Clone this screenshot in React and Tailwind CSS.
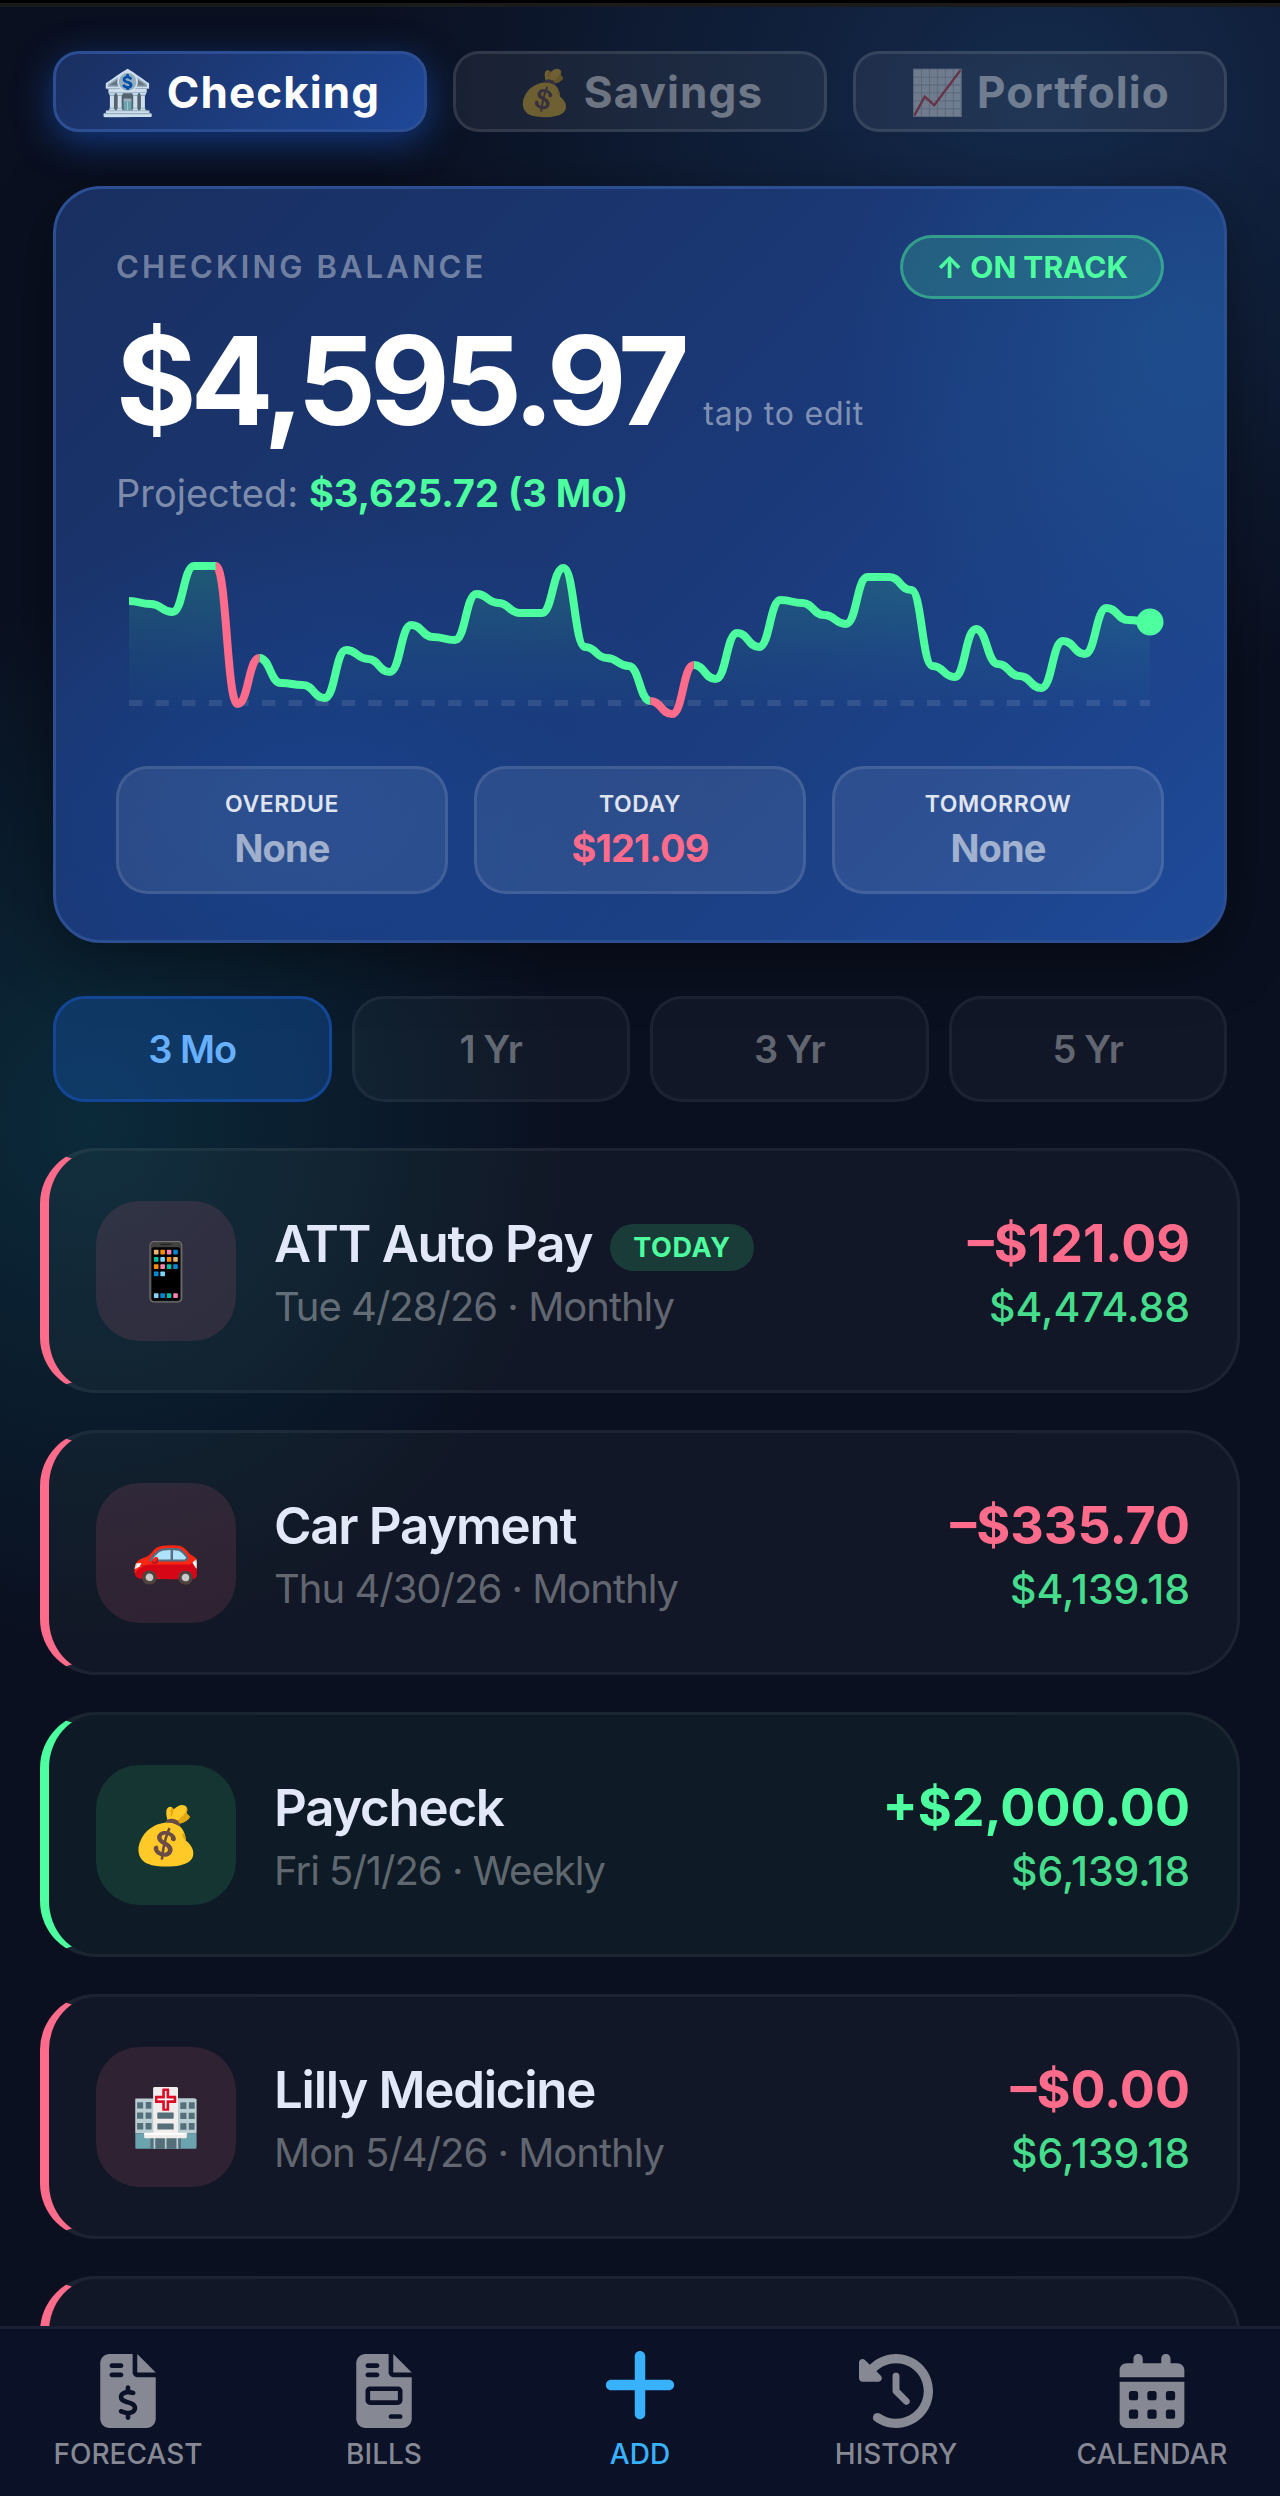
import React from "react";
import {
  FaFileInvoiceDollar,
  FaFileInvoice,
  FaPlus,
  FaClockRotateLeft,
  FaCalendarDays,
} from "react-icons/fa6";

const BALANCES = [
  50, 53, 61, 15, 15, 153, 107, 132, 134, 147, 99, 108, 121, 74, 86, 89, 43, 52,
  62, 62, 17, 96, 107, 115, 150, 163, 114, 128, 82, 96, 49, 52, 64, 73, 26, 26,
  39, 115, 126, 78, 113, 125, 137, 90, 103, 57, 69, 71,
];
const pointX = (i) => 13 + (i * 1021) / (BALANCES.length - 1);

function curve(from, to) {
  let d = `M${pointX(from)},${BALANCES[from]}`;
  for (let i = from; i < to; i++) {
    const mid = (pointX(i) + pointX(i + 1)) / 2;
    d += ` C${mid},${BALANCES[i]} ${mid},${BALANCES[i + 1]} ${pointX(i + 1)},${BALANCES[i + 1]}`;
  }
  return d;
}

function Sparkline() {
  const green = { stroke: "#4dff9e" };
  const red = { stroke: "#ff6b8a" };
  return (
    <svg viewBox="0 0 1048 175" className="mt-8 block w-full" fill="none" role="img" aria-label="Balance forecast">
      <defs>
        <linearGradient id="fill" x1="0" y1="0" x2="0" y2="1">
          <stop offset="0" stopColor="#34d88a" stopOpacity="0.22" />
          <stop offset="0.6" stopColor="#34d88a" stopOpacity="0.06" />
          <stop offset="1" stopColor="#34d88a" stopOpacity="0" />
        </linearGradient>
      </defs>
      <path d={`${curve(0, 47)} L1034,163 L13,163 Z`} fill="url(#fill)" />
      <path d="M13 152H1034" stroke="#fff" strokeOpacity="0.1" strokeWidth="6" strokeDasharray="13.3 13.3" />
      <g strokeWidth="8" strokeLinejoin="round">
        <path d={curve(0, 4)} {...green} />
        <path d={curve(6, 24)} {...green} />
        <path d={curve(26, 47)} {...green} />
        <path d={curve(4, 6)} {...red} />
        <path d={curve(24, 26)} {...red} />
      </g>
      <circle cx="1034" cy="71" r="13.5" fill="#4dff9e" />
    </svg>
  );
}

function AccountTab({ emoji, label, active }) {
  return (
    <button
      type="button"
      aria-pressed={!!active}
      className={
        "flex h-[81px] flex-1 items-center justify-center rounded-[26px] border-[3px] text-[44px] font-bold tracking-wide " +
        (active
          ? "border-[#2c4f94] bg-linear-135 from-[#1a2f60] to-[#1e4898] text-white shadow-[0_10px_36px_rgba(26,84,190,0.6)]"
          : "border-white/10 bg-white/6 text-white/90")
      }
    >
      <span className={active ? "flex items-center gap-3" : "flex items-center gap-3 opacity-40"}>
        <span className="tracking-normal">{emoji}</span>
        <span>{label}</span>
      </span>
    </button>
  );
}

function Stat({ label, value, due }) {
  return (
    <div className="flex h-32 flex-1 flex-col items-center justify-center rounded-[32px] border-[3px] border-white/10 bg-white/8 pt-1">
      <dt className="text-[23px] leading-8 font-semibold tracking-wide text-white/85">{label}</dt>
      <dd className={"text-[38px] leading-[56px] font-bold " + (due ? "tracking-tight text-[#ff6b8a]" : "tracking-tight text-white/55")}>{value}</dd>
    </div>
  );
}

function RangeButton({ label, active }) {
  return (
    <button
      type="button"
      aria-pressed={!!active}
      className={
        "h-[106px] flex-1 rounded-[32px] border-[3px] text-[38px] font-semibold tracking-tight " +
        (active
          ? "border-[#134694] bg-[#1450a0]/45 text-[#66b0ff]"
          : "border-white/5 bg-white/3 text-white/35")
      }
    >
      {label}
    </button>
  );
}

const CARD = "h-[245px] rounded-[56px] border-[3px] border-l-[9px] border-white/5 ";

function Transaction({ emoji, name, today, when, amount, balance, income }) {
  return (
    <li
      className={
        CARD +
        "flex items-center px-[47px] " +
        (income ? "border-l-[#4dff9e] bg-[#0e1a25]" : "border-l-[#ff6b8a] bg-[#fff8e8]/3")
      }
    >
      <span
        className={
          "flex size-[140px] shrink-0 items-center justify-center rounded-[44px] text-[56px] " +
          (income ? "bg-[#4dff9e]/12" : "bg-[#ff6b8a]/13")
        }
      >
        {emoji}
      </span>
      <div className="ml-[38px] min-w-0 flex-1 pt-2">
        <div className="flex items-center gap-[18px]">
          <h2 className="text-[51px] leading-[64px] font-semibold tracking-tight whitespace-nowrap text-[#e2e8f8]">{name}</h2>
          {today && (
            <span className="mt-2 rounded-full bg-[#4dff9e]/16 px-[23px] text-[27px] leading-[47px] font-bold tracking-wide text-[#4dff9e]">
              TODAY
            </span>
          )}
        </div>
        <p className="text-[40px] leading-[62px] tracking-tight text-white/35">{when}</p>
      </div>
      <div className="pt-2 text-right">
        <p className={"text-[52px] leading-[64px] font-bold " + (income ? "text-[#4dff9e]" : "text-[#ff6b8a]")}>{amount}</p>
        <p className="text-[41px] leading-[62px] font-medium text-[#45dc8b]">{balance}</p>
      </div>
    </li>
  );
}

function NavLink({ Icon, label, active, iconClass }) {
  return (
    <a
      href={"#" + label.toLowerCase()}
      className={"flex flex-1 flex-col items-center text-[28px] leading-8 font-medium " + (active ? "text-[#38b2ff]" : "text-[#868893]")}
    >
      <span className="flex h-[102px] items-center pt-2">
        <Icon className={iconClass} />
      </span>
      {label}
    </a>
  );
}

export default function App() {
  return (
    <div className="h-screen overflow-hidden border-t-[3px] border-black bg-[#0a1020] bg-[radial-gradient(ellipse_680px_600px_at_1040px_100px,#142a4c,transparent),radial-gradient(ellipse_480px_520px_at_90px_1120px,#0b2a3a,transparent)] font-['Inter',sans-serif] text-white">
      <div className="border-t-4 border-[#1b1b1b] px-10 pt-11">
        <nav className="mx-[13px] flex gap-[26px]" aria-label="Accounts">
          <AccountTab emoji="🏦" label="Checking" active />
          <AccountTab emoji="💰" label="Savings" />
          <AccountTab emoji="📈" label="Portfolio" />
        </nav>

        <section className="mx-[13px] mt-[54px] rounded-[48px] border-[3px] border-[#2c4f94] bg-[radial-gradient(ellipse_340px_340px_at_1120px_150px,rgba(32,90,150,0.5),transparent),radial-gradient(ellipse_420px_300px_at_240px_620px,rgba(24,72,152,0.55),transparent),linear-gradient(135deg,#192f60,#1b3a7a_55%,#1e4a98)] px-[60px] py-[46px] shadow-[0_16px_64px_rgba(0,0,0,0.4)]">
          <div className="flex items-center justify-between">
            <h1 className="text-[31px] font-semibold tracking-widest text-white/40">CHECKING BALANCE</h1>
            <span className="rounded-full border-[3px] border-[#4dff9e]/40 bg-[#4dff9e]/18 px-[33px] text-[30px] leading-[58px] font-bold text-[#4dff9e]">
              ↑ ON TRACK
            </span>
          </div>
          <div className="mt-4 flex items-baseline gap-5">
            <span className="text-[123px] leading-[132px] font-bold tracking-tighter">$4,595.97</span>
            <button type="button" className="text-[32px] tracking-wide text-white/45">tap to edit</button>
          </div>
          <p className="mt-5 text-[38px] leading-[52px] text-white/45">
            Projected: <span className="font-bold text-[#4dff9e]">$3,625.72 (3 Mo)</span>
          </p>
          <Sparkline />
          <dl className="mt-10 flex gap-[26px]">
            <Stat label="OVERDUE" value="None" />
            <Stat label="TODAY" value="$121.09" due />
            <Stat label="TOMORROW" value="None" />
          </dl>
        </section>

        <div className="mx-[13px] mt-[53px] flex gap-5" role="group" aria-label="Forecast range">
          <RangeButton label="3 Mo" active />
          <RangeButton label="1 Yr" />
          <RangeButton label="3 Yr" />
          <RangeButton label="5 Yr" />
        </div>

        <ul className="mt-[46px] flex flex-col gap-[37px]">
          <Transaction emoji="📱" name="ATT Auto Pay" today when="Tue 4/28/26 · Monthly" amount="–$121.09" balance="$4,474.88" />
          <Transaction emoji="🚗" name="Car Payment" when="Thu 4/30/26 · Monthly" amount="–$335.70" balance="$4,139.18" />
          <Transaction emoji="💰" name="Paycheck" when="Fri 5/1/26 · Weekly" amount="+$2,000.00" balance="$6,139.18" income />
          <Transaction emoji="🏥" name="Lilly Medicine" when="Mon 5/4/26 · Monthly" amount="–$0.00" balance="$6,139.18" />
          <li className={CARD + "border-l-[#ff6b8a] bg-[#fff8e8]/3"} />
        </ul>
      </div>

      <nav className="fixed inset-x-0 bottom-0 flex h-[170px] border-t-[3px] border-[#1a2034] bg-[#0b1126] pt-[7px]" aria-label="Main">
        <NavLink Icon={FaFileInvoiceDollar} label="FORECAST" iconClass="size-[74px]" />
        <NavLink Icon={FaFileInvoice} label="BILLS" iconClass="size-[74px]" />
        <NavLink Icon={FaPlus} label="ADD" active iconClass="mb-3 size-[84px]" />
        <NavLink Icon={FaClockRotateLeft} label="HISTORY" iconClass="size-[74px]" />
        <NavLink Icon={FaCalendarDays} label="CALENDAR" iconClass="size-[74px]" />
      </nav>
    </div>
  );
}
